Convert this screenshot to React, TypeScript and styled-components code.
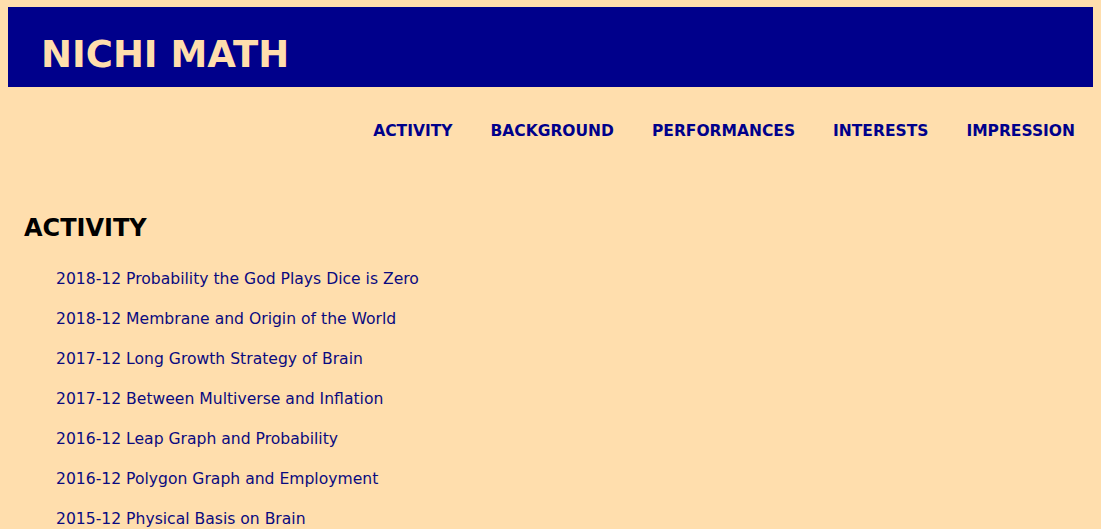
import React from "react";
import styled, { createGlobalStyle } from "styled-components";

const Global = createGlobalStyle`
  html, body { margin: 0; padding: 0; }
  body {
    background: #ffdead;
    padding: 7px 8px 0 8px;
    font-family: "DejaVu Sans", Verdana, sans-serif;
  }
`;

const Header = styled.header`
  background: #00008b;
  height: 80px;
  display: flex;
  align-items: center;
  padding-left: 33px;
`;

const Title = styled.h1`
  margin: 0;
  color: #ffdead;
  font-size: 37px;
  font-weight: bold;
  padding-top: 14px;
`;

const Nav = styled.nav`
  display: flex;
  justify-content: flex-end;
  gap: 38px;
  padding: 35px 18px 0 0;
`;

const NavLink = styled.a`
  color: #00008b;
  font-weight: bold;
  font-size: 15.5px;
  text-decoration: none;
`;

const Section = styled.section`
  padding: 74px 0 0 16px;
`;

const Heading = styled.h2`
  margin: 0 0 28px 0;
  font-size: 24px;
  font-weight: bold;
  color: #000;
`;

const List = styled.ul`
  list-style: none;
  margin: 0;
  padding: 0 0 0 32px;
  display: flex;
  flex-direction: column;
  gap: 21px;
`;

const Item = styled.li`
  font-size: 15.6px;
  line-height: 19px;
  color: #0a0a80;
`;

const navItems = ["ACTIVITY", "BACKGROUND", "PERFORMANCES", "INTERESTS", "IMPRESSION"];
const items = [
  "2018-12 Probability the God Plays Dice is Zero",
  "2018-12 Membrane and Origin of the World",
  "2017-12 Long Growth Strategy of Brain",
  "2017-12 Between Multiverse and Inflation",
  "2016-12 Leap Graph and Probability",
  "2016-12 Polygon Graph and Employment",
  "2015-12 Physical Basis on Brain",
];

export default function App() {
  return (
    <>
      <Global />
      <Header>
        <Title>NICHI MATH</Title>
      </Header>
      <Nav>
        {navItems.map((n) => (
          <NavLink key={n} href="#">{n}</NavLink>
        ))}
      </Nav>
      <Section>
        <Heading>ACTIVITY</Heading>
        <List>
          {items.map((t, i) => (
            <Item key={i}>{t}</Item>
          ))}
        </List>
      </Section>
    </>
  );
}
